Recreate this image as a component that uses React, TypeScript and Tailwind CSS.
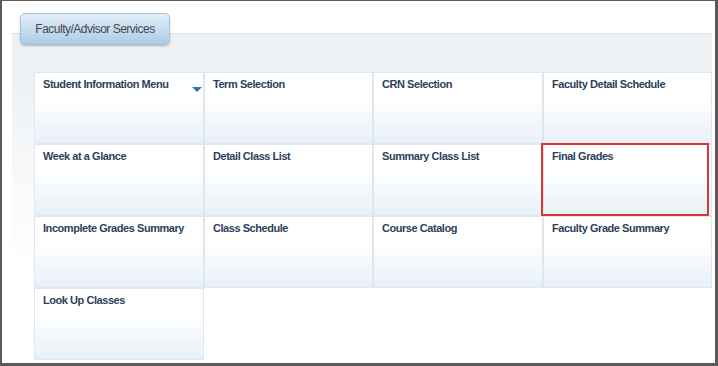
import React from "react";

const items: string[] = [
  "Student Information Menu",
  "Term Selection",
  "CRN Selection",
  "Faculty Detail Schedule",
  "Week at a Glance",
  "Detail Class List",
  "Summary Class List",
  "Final Grades",
  "Incomplete Grades Summary",
  "Class Schedule",
  "Course Catalog",
  "Faculty Grade Summary",
  "Look Up Classes",
];

const Tile: React.FC<{ label: string; index: number }> = ({ label, index }) => {
  return (
    <div className="relative h-[72px] border border-[#dfe7ee] bg-linear-to-b from-white from-40% to-[#e8f0f8] pl-[8px] pt-[5px]">
      <span className="block text-[11px] font-bold leading-[13px] tracking-[-0.45px] text-[#2d3f5b]">
        {label}
      </span>
      {index === 0 && (
        <span className="absolute right-[1px] top-[14px] h-0 w-0 border-l-[5px] border-r-[5px] border-t-[5px] border-l-transparent border-r-transparent border-t-[#2f73b3]" />
      )}
      {label === "Final Grades" && (
        <span className="absolute left-[-3px] top-[-2px] h-[73px] w-[168px] border-2 border-[#d8362e]" />
      )}
    </div>
  );
};

export default function App() {
  return (
    <div
      className="h-[366px] w-[718px] overflow-hidden border-b-[3px] border-l-2 border-r-[3px] border-t border-[#5a5a5a] bg-white pt-[12px]"
      style={{ fontFamily: '"Liberation Sans", Arial, sans-serif' }}
    >
      <div className="relative z-10 ml-[18px] flex h-[32px] w-[150px] items-center justify-center rounded-[5px] border border-[#a9c3d8] bg-linear-to-b from-[#e4eff8] to-[#a9cce8] shadow-[0_1px_2px_rgba(0,0,0,0.25)]">
        <span className="text-[12px] tracking-[-0.5px] text-[#45494f]">Faculty/Advisor Services</span>
      </div>
      <div className="-mt-[12px] ml-[10px] h-[340px] w-[700px] border-t border-[#dde3e8] bg-linear-to-b from-[#edf1f4] from-10% to-white to-70% pl-[22px] pt-[38px]">
        <div className="grid grid-cols-[170px_169px_170px_169px]">
          {items.map((label, i) => (
            <Tile key={label} label={label} index={i} />
          ))}
        </div>
      </div>
    </div>
  );
}
